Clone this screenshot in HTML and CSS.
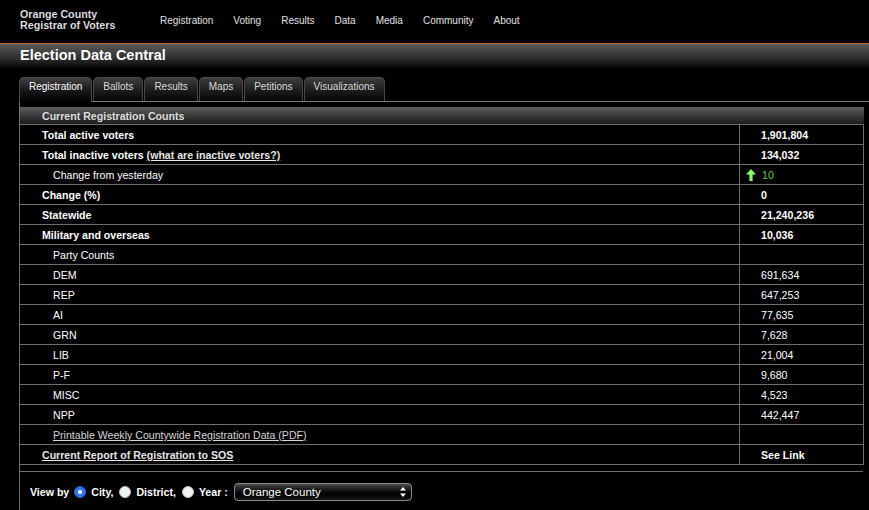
FILE: index.html
```html
<!DOCTYPE html>
<html lang="en">
<head>
<meta charset="utf-8">
<title>Election Data Central</title>
<link rel="stylesheet" href="styles.css">
</head>
<body>
<header class="topbar">
  <div class="logo">Orange County<br>Registrar of Voters</div>
  <nav class="mainnav">
    <a href="#">Registration</a>
    <a href="#">Voting</a>
    <a href="#">Results</a>
    <a href="#">Data</a>
    <a href="#">Media</a>
    <a href="#">Community</a>
    <a href="#">About</a>
  </nav>
</header>
<div class="titlebar"><h1 class="title">Election Data Central</h1></div>
<div class="tabs">
  <a class="tab active" href="#">Registration</a>
  <a class="tab" href="#">Ballots</a>
  <a class="tab" href="#">Results</a>
  <a class="tab" href="#">Maps</a>
  <a class="tab" href="#">Petitions</a>
  <a class="tab" href="#">Visualizations</a>
</div>
<div class="panel">
  <table class="counts">
    <colgroup><col class="c-label"><col class="c-val"></colgroup>
    <thead>
      <tr><th colspan="2">Current Registration Counts</th></tr>
    </thead>
    <tbody>
      <tr><td class="lbl b">Total active voters</td><td class="val b">1,901,804</td></tr>
      <tr><td class="lbl b">Total inactive voters <a class="lnk" href="#">(what are inactive voters?)</a></td><td class="val b">134,032</td></tr>
      <tr><td class="lbl sub">Change from yesterday</td><td class="val up"><svg class="arrow" width="10" height="12" viewBox="0 0 10 12"><path d="M5 0 L10 5.5 L6.6 5.5 L6.6 12 L3.4 12 L3.4 5.5 L0 5.5 Z" fill="#8cff6a"/></svg><span class="green">10</span></td></tr>
      <tr><td class="lbl b">Change (%)</td><td class="val b">0</td></tr>
      <tr><td class="lbl b">Statewide</td><td class="val b">21,240,236</td></tr>
      <tr><td class="lbl b">Military and overseas</td><td class="val b">10,036</td></tr>
      <tr><td class="lbl sub">Party Counts</td><td class="val"></td></tr>
      <tr><td class="lbl sub">DEM</td><td class="val">691,634</td></tr>
      <tr><td class="lbl sub">REP</td><td class="val">647,253</td></tr>
      <tr><td class="lbl sub">AI</td><td class="val">77,635</td></tr>
      <tr><td class="lbl sub">GRN</td><td class="val">7,628</td></tr>
      <tr><td class="lbl sub">LIB</td><td class="val">21,004</td></tr>
      <tr><td class="lbl sub">P-F</td><td class="val">9,680</td></tr>
      <tr><td class="lbl sub">MISC</td><td class="val">4,523</td></tr>
      <tr><td class="lbl sub">NPP</td><td class="val">442,447</td></tr>
      <tr><td class="lbl sub"><a class="lnk plain" href="#">Printable Weekly Countywide Registration Data (PDF)</a></td><td class="val"></td></tr>
      <tr><td class="lbl b"><a class="lnk" href="#">Current Report of Registration to SOS</a></td><td class="val b">See Link</td></tr>
    </tbody>
  </table>
  <form class="viewby">
    <span class="vb-label">View by</span>
    <input class="radio" type="radio" name="by" checked>
    <span class="vb-label">City,</span>
    <input class="radio" type="radio" name="by">
    <span class="vb-label">District,</span>
    <input class="radio" type="radio" name="by">
    <span class="vb-label">Year :</span>
    <span class="selectwrap">
      <select class="select"><option>Orange County</option></select>
      <svg class="sel-arrows" width="6" height="10" viewBox="0 0 6 10"><path d="M3 0 L6 3.6 L0 3.6 Z M0 6.4 L6 6.4 L3 10 Z" fill="#fff"/></svg>
    </span>
  </form>
</div>
</body>
</html>
```
FILE: styles.css
```css
* { box-sizing: border-box; }
html, body {
  margin: 0;
  padding: 0;
  background: #000;
  color: #fff;
  font-family: "Liberation Sans", Arial, Helvetica, sans-serif;
  overflow: hidden;
}
a { color: inherit; text-decoration: none; }

.topbar {
  display: flex;
  align-items: flex-start;
  height: 44px;
  padding-left: 20px;
  border-bottom: 1px solid #c2621e;
  background: #000;
}
.logo {
  width: 140px;
  padding-top: 9px;
  font-size: 10.7px;
  line-height: 10.5px;
  font-weight: bold;
  color: #dcdcdc;
}
.mainnav {
  display: flex;
  gap: 20px;
  padding-top: 15px;
  font-size: 10px;
  line-height: 12px;
}
.mainnav a { color: #e0e0e0; }

.titlebar {
  height: 33px;
  padding: 3px 20px 0;
  background: linear-gradient(to bottom, #5a5a5a 0%, #2c2c2c 45%, #000 78%);
}
.title {
  margin: 0;
  font-size: 14.5px;
  line-height: 17px;
  font-weight: bold;
  color: #fff;
}

.tabs {
  display: flex;
  gap: 1px;
  margin-left: 19px;
  border-bottom: 1px solid #7a7a7a;
  height: 25px;
}
.tab {
  height: 24px;
  padding: 3px 9px 0;
  font-size: 10px;
  line-height: 12px;
  color: #dcdcdc;
  border: 1px solid #474747;
  border-bottom: none;
  border-radius: 5px 5px 0 0;
  background: linear-gradient(to bottom, #3e3e3e 0%, #1c1c1c 55%, #050505 100%);
}
.tab.active {
  height: 25px;
  margin-bottom: -1px;
  color: #fff;
  background: linear-gradient(to bottom, #404040 0%, #1a1a1a 50%, #000 100%);
}

.panel {
  margin-left: 19px;
  border-left: 1px solid #6e6e6e;
  padding-top: 5px;
  height: 420px;
}
.counts {
  width: 844px;
  table-layout: fixed;
  border-collapse: separate;
  border-spacing: 0;
  font-size: 10.6px;
}
.c-label { width: 720px; }
.c-val { width: 124px; }
.counts th {
  height: 18px;
  padding: 1px 0 0 22px;
  text-align: left;
  line-height: 16px;
  font-weight: bold;
  color: #dedede;
  border-bottom: 1px solid #6e6e6e;
  background: linear-gradient(to bottom, #5e5e5e 0%, #3a3a3a 50%, #1c1c1c 100%);
}
.counts td {
  height: 20px;
  padding: 1px 0 0;
  line-height: 18px;
  border-bottom: 1px solid #6e6e6e;
  border-right: 1px solid #6e6e6e;
  color: #fff;
  white-space: nowrap;
}
.counts td.lbl { padding-left: 22px; }
.counts td.sub { padding-left: 33px; font-weight: normal; }
.counts td.val { padding-left: 21px; }
.counts td.b { font-weight: bold; }
.counts td.up { padding-left: 6px; }
.arrow { vertical-align: -2px; margin-right: 6px; }
.green { color: #62c63a; }
.lnk { text-decoration: underline; color: #e6e6e6; }
.lnk.plain { color: #d6d6d6; }

.viewby {
  display: flex;
  align-items: center;
  width: 843px;
  margin: 6px 0 0;
  padding: 11px 0 0 10px;
  border-top: 1px solid #6e6e6e;
  font-size: 10.6px;
  font-weight: bold;
  color: #fff;
}
.vb-label { margin-right: 6px; }
.viewby .vb-label:first-child { margin-right: 5px; }
.radio {
  appearance: none;
  -webkit-appearance: none;
  width: 12px;
  height: 12px;
  margin: 0 5px 0 0;
  border-radius: 50%;
  background: #f2f2f2;
  border: 1px solid #bdbdbd;
  position: relative;
}
.radio:checked {
  background: #2f74ea;
  border-color: #2a66d0;
}
.radio:checked::after {
  content: "";
  position: absolute;
  left: 3px;
  top: 3px;
  width: 4px;
  height: 4px;
  border-radius: 50%;
  background: #fff;
}
.selectwrap {
  position: relative;
  display: inline-block;
  margin-left: 0;
}
.select {
  appearance: none;
  -webkit-appearance: none;
  width: 178px;
  height: 18px;
  padding: 0 0 0 8px;
  border: 1px solid #8a8a8a;
  border-radius: 4px;
  background: linear-gradient(to bottom, #4a4a4a 0%, #1a1a1a 35%, #000 60%, #151515 100%);
  color: #fff;
  font-family: "Liberation Sans", Arial, Helvetica, sans-serif;
  font-size: 11.5px;
  line-height: 16px;
  outline: none;
}
.sel-arrows {
  position: absolute;
  right: 6px;
  top: 4px;
}
```
